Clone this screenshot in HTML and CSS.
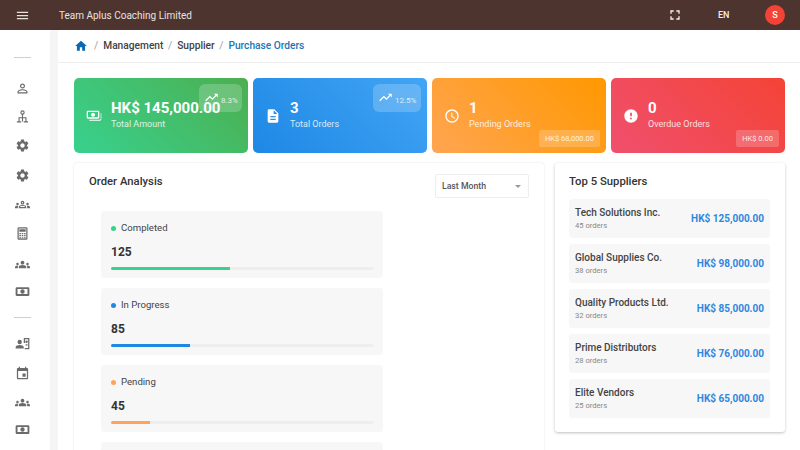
FILE: index.html
```html
<!DOCTYPE html>
<html lang="en">
<head>
<meta charset="utf-8">
<title>Purchase Orders</title>
<link rel="stylesheet" href="styles.css">
</head>
<body>
<svg class="defs" aria-hidden="true">
  <symbol id="i-menu" viewBox="0 0 24 24"><path d="M3 18h18v-2H3v2zm0-5h18v-2H3v2zm0-7v2h18V6H3z"/></symbol>
  <symbol id="i-full" viewBox="0 0 24 24"><path d="M7 14H5v5h5v-2H7v-3zm-2-4h2V7h3V5H5v5zm12 7h-3v2h5v-5h-2v3zM14 5v2h3v3h2V5h-5z"/></symbol>
  <symbol id="i-home" viewBox="0 0 24 24"><path d="M10 20v-6h4v6h5v-8h3L12 3 2 12h3v8z"/></symbol>
  <symbol id="i-person" viewBox="0 0 24 24"><path d="M12 5.9c1.16 0 2.1.94 2.1 2.1s-.94 2.1-2.1 2.1S9.9 9.16 9.9 8s.94-2.1 2.1-2.1m0 9c2.97 0 6.1 1.46 6.1 2.1v1.1H5.9V17c0-.64 3.13-2.1 6.1-2.1M12 4C9.79 4 8 5.79 8 8s1.79 4 4 4 4-1.79 4-4-1.79-4-4-4zm0 9c-2.67 0-8 1.34-8 4v3h16v-3c0-2.66-5.33-4-8-4z"/></symbol>
  <symbol id="i-tree" viewBox="0 0 24 24"><g fill="none" stroke="currentColor" stroke-width="1.8"><circle cx="12" cy="5.500" r="2.600"/><path d="M12 8v12M6.500 20v-6h11v6M3 20.500h7M14 20.500h7"/></g></symbol>
  <symbol id="i-gear" viewBox="0 0 24 24"><path d="M19.14 12.94c.04-.3.06-.61.06-.94 0-.32-.02-.64-.07-.94l2.03-1.58c.18-.14.23-.41.12-.61l-1.92-3.32c-.12-.22-.37-.29-.59-.22l-2.39.96c-.5-.38-1.03-.7-1.62-.94l-.36-2.54c-.04-.24-.24-.41-.48-.41h-3.84c-.24 0-.43.17-.47.41l-.36 2.54c-.59.24-1.13.57-1.62.94l-2.39-.96c-.22-.08-.47 0-.59.22L2.74 8.87c-.12.21-.08.47.12.61l2.03 1.58c-.05.3-.09.63-.09.94s.02.64.07.94l-2.03 1.58c-.18.14-.23.41-.12.61l1.92 3.32c.12.22.37.29.59.22l2.39-.96c.5.38 1.03.7 1.62.94l.36 2.54c.05.24.24.41.48.41h3.84c.24 0 .44-.17.47-.41l.36-2.54c.59-.24 1.13-.56 1.62-.94l2.39.96c.22.08.47 0 .59-.22l1.92-3.32c.12-.22.07-.47-.12-.61l-2.01-1.58zM12 15.6c-1.98 0-3.6-1.62-3.6-3.6s1.62-3.6 3.6-3.6 3.6 1.62 3.6 3.6-1.62 3.6-3.6 3.6z"/></symbol>
  <symbol id="i-group-o" viewBox="0 0 24 24"><path fill-rule="evenodd" d="M12 6a3 3 0 1 1 0 6 3 3 0 0 1 0-6zm0 2a1 1 0 1 0 0 2 1 1 0 0 0 0-2zm0 4.750c1.630 0 3.070.39 4.240.9 1.080.48 1.760 1.560 1.760 2.730V18H6v-1.620c0-1.170.68-2.250 1.760-2.720 1.170-.52 2.610-.91 4.240-.91zM8 16h8c0-.6-.3-.9-.7-1.100-1-.4-2.100-.65-3.300-.65s-2.300.25-3.300.65c-.4.2-.7.5-.7 1.100zM4 9a2 2 0 1 1 0 4 2 2 0 0 1 0-4zm16 0a2 2 0 1 1 0 4 2 2 0 0 1 0-4zM4 14c.39 0 .76.04 1.130.1-.4.68-.63 1.460-.63 2.290V18H0v-1.570c0-.81.48-1.530 1.220-1.850C2.070 14.210 3.010 14 4 14zm16 0c.99 0 1.930.21 2.780.58.74.32 1.220 1.040 1.220 1.850V18h-4.500v-1.610c0-.83-.23-1.610-.63-2.290.37-.06.74-.1 1.130-.1z"/></symbol>
  <symbol id="i-group" viewBox="0 0 24 24"><path d="M12 12.75c1.63 0 3.07.39 4.24.9 1.08.48 1.76 1.56 1.76 2.73V18H6v-1.61c0-1.18.68-2.26 1.76-2.73 1.17-.52 2.61-.91 4.24-.91zM4 13c1.1 0 2-.9 2-2s-.9-2-2-2-2 .9-2 2 .9 2 2 2zm1.13 1.1c-.37-.06-.74-.1-1.13-.1-.99 0-1.93.21-2.78.58C.48 14.9 0 15.62 0 16.43V18h4.5v-1.61c0-.83.23-1.61.63-2.29zM20 13c1.1 0 2-.9 2-2s-.9-2-2-2-2 .9-2 2 .9 2 2 2zm4 3.43c0-.81-.48-1.53-1.22-1.85-.85-.37-1.79-.58-2.78-.58-.39 0-.76.04-1.13.1.4.68.63 1.46.63 2.29V18H24v-1.57zM12 6c1.66 0 3 1.34 3 3s-1.34 3-3 3-3-1.34-3-3 1.34-3 3-3z"/></symbol>
  <symbol id="i-calc" viewBox="0 0 24 24"><path fill-rule="evenodd" d="M6 2h12a2 2 0 0 1 2 2v16a2 2 0 0 1-2 2H6a2 2 0 0 1-2-2V4a2 2 0 0 1 2-2zm0 2v16h12V4H6zm1 1h10v4H7V5zm0 6h2.500v2H7v-2zm3.750 0h2.500v2h-2.500v-2zm3.750 0H17v2h-2.500v-2zM7 14.500h2.500v2H7v-2zm3.750 0h2.500v2h-2.500v-2zm3.750 0H17v2h-2.500v-2zM7 18h2.500v1.500H7V18zm3.750 0h2.500v1.500h-2.500V18zm3.750 0H17v1.500h-2.500V18z"/></symbol>
  <symbol id="i-cash" viewBox="0 0 24 24"><path fill-rule="evenodd" d="M3 5h18a2 2 0 0 1 2 2v10a2 2 0 0 1-2 2H3a2 2 0 0 1-2-2V7a2 2 0 0 1 2-2zm1 3v8h16V8H4zm8 .5a3.500 3.500 0 1 1 0 7 3.500 3.500 0 0 1 0-7z"/></symbol>
  <symbol id="i-contact" viewBox="0 0 24 24"><path fill-rule="evenodd" d="M7.500 6a3.500 3.500 0 1 1 0 7 3.500 3.500 0 0 1 0-7zm0 8.500c2.800 0 6.500 1.300 6.500 3.500v2H1v-2c0-2.200 3.700-3.500 6.500-3.500zM14 3h9v18h-7.500v-2H21V5h-5v6h-2V3zm4.500 4a2 2 0 1 1 0 4 2 2 0 0 1 0-4zm-1.500 6h3v2h-3v-2z"/></symbol>
  <symbol id="i-event" viewBox="0 0 24 24"><path d="M17 12h-5v5h5v-5zM16 1v2H8V1H6v2H5c-1.11 0-1.99.9-1.99 2L3 19c0 1.1.89 2 2 2h14c1.1 0 2-.9 2-2V5c0-1.1-.9-2-2-2h-1V1h-2zm3 18H5V8h14v11z"/></symbol>
  <symbol id="i-money" viewBox="0 0 24 24"><path fill-rule="evenodd" d="M3 4h15a2 2 0 0 1 2 2v8a2 2 0 0 1-2 2H3a2 2 0 0 1-2-2V6a2 2 0 0 1 2-2zm0 2v8h15V6H3zm7.500 1a3 3 0 1 1 0 6 3 3 0 0 1 0-6zM22 8h1v9a2 2 0 0 1-2 2H5v-1.500h15.500A1.500 1.500 0 0 0 22 16V8z"/></symbol>
  <symbol id="i-doc" viewBox="0 0 24 24"><path d="M14 2H6c-1.1 0-1.99.9-1.99 2L4 20c0 1.1.89 2 1.99 2H18c1.1 0 2-.9 2-2V8l-6-6zm2 16H8v-2h8v2zm0-4H8v-2h8v2zm-3-5V3.500L18.500 9H13z"/></symbol>
  <symbol id="i-clock" viewBox="0 0 24 24"><path d="M11.990 2C6.470 2 2 6.480 2 12s4.470 10 9.990 10C17.520 22 22 17.520 22 12S17.520 2 11.990 2zM12 20c-4.420 0-8-3.580-8-8s3.580-8 8-8 8 3.580 8 8-3.580 8-8 8zm.5-13H11v6l5.250 3.150.75-1.230-4.500-2.670z"/></symbol>
  <symbol id="i-error" viewBox="0 0 24 24"><path d="M12 2C6.480 2 2 6.480 2 12s4.480 10 10 10 10-4.480 10-10S17.520 2 12 2zm1.300 15h-2.600v-2.500h2.600V17zm0-4.500h-2.600V7h2.600v5.500z"/></symbol>
  <symbol id="i-trend" viewBox="0 0 24 24"><path d="M16 6l2.290 2.290-4.880 4.880-4-4L2 16.590 3.410 18l6-6 4 4 6.300-6.290L22 12V6z"/></symbol>
</svg>

<header class="topbar">
  <svg class="top-menu"><use href="#i-menu"/></svg>
  <span class="brand">Team Aplus Coaching Limited</span>
  <div class="top-actions">
    <svg class="top-full"><use href="#i-full"/></svg>
    <span class="lang">EN</span>
    <span class="avatar">S</span>
  </div>
</header>

<div class="shell">
  <nav class="sidebar">
    <hr class="side-rule side-rule-first">
    <svg class="side-icon s1"><use href="#i-person"/></svg>
    <svg class="side-icon s2"><use href="#i-tree"/></svg>
    <svg class="side-icon s3"><use href="#i-gear"/></svg>
    <svg class="side-icon s4"><use href="#i-gear"/></svg>
    <svg class="side-icon s5"><use href="#i-group-o"/></svg>
    <svg class="side-icon s6"><use href="#i-calc"/></svg>
    <svg class="side-icon s7"><use href="#i-group"/></svg>
    <svg class="side-icon s8"><use href="#i-cash"/></svg>
    <hr class="side-rule side-rule-second">
    <svg class="side-icon s9"><use href="#i-contact"/></svg>
    <svg class="side-icon s10"><use href="#i-event"/></svg>
    <svg class="side-icon s11"><use href="#i-group"/></svg>
    <svg class="side-icon s12"><use href="#i-cash"/></svg>
  </nav>
  <div class="gutter"></div>
  <main class="main">
    <div class="crumbs">
      <svg class="crumb-home"><use href="#i-home"/></svg>
      <span class="sep">/</span><span class="crumb">Management</span>
      <span class="sep">/</span><span class="crumb">Supplier</span>
      <span class="sep">/</span><span class="crumb crumb-active">Purchase Orders</span>
    </div>
    <div class="content">
      <section class="cards">
        <article class="card card-green">
          <svg class="card-icon"><use href="#i-money"/></svg>
          <div class="card-text"><div class="card-value">HK$ 145,000.00</div><div class="card-label">Total Amount</div></div>
          <div class="trend trend-green"><svg class="trend-icon"><use href="#i-trend"/></svg><span>8.3%</span></div>
        </article>
        <article class="card card-blue">
          <svg class="card-icon"><use href="#i-doc"/></svg>
          <div class="card-text"><div class="card-value">3</div><div class="card-label">Total Orders</div></div>
          <div class="trend trend-blue"><svg class="trend-icon"><use href="#i-trend"/></svg><span>12.5%</span></div>
        </article>
        <article class="card card-orange">
          <svg class="card-icon"><use href="#i-clock"/></svg>
          <div class="card-text"><div class="card-value">1</div><div class="card-label">Pending Orders</div></div>
          <div class="amount">HK$ 68,000.00</div>
        </article>
        <article class="card card-red">
          <svg class="card-icon"><use href="#i-error"/></svg>
          <div class="card-text"><div class="card-value">0</div><div class="card-label">Overdue Orders</div></div>
          <div class="amount">HK$ 0.00</div>
        </article>
      </section>
      <section class="panels">
        <div class="panel panel-left">
          <div class="panel-head">
            <h2 class="panel-title">Order Analysis</h2>
            <div class="select"><span>Last Month</span><i class="caret"></i></div>
          </div>
          <div class="stats">
            <div class="stat">
              <div class="stat-name"><i class="dot dot-green"></i>Completed</div>
              <div class="stat-num">125</div>
              <div class="bar"><div class="fill fill-green" style="width:45.2%"></div></div>
            </div>
            <div class="stat">
              <div class="stat-name"><i class="dot dot-blue"></i>In Progress</div>
              <div class="stat-num">85</div>
              <div class="bar"><div class="fill fill-blue" style="width:30.2%"></div></div>
            </div>
            <div class="stat">
              <div class="stat-name"><i class="dot dot-orange"></i>Pending</div>
              <div class="stat-num">45</div>
              <div class="bar"><div class="fill fill-orange" style="width:15%"></div></div>
            </div>
            <div class="stat"></div>
          </div>
        </div>
        <div class="panel panel-right">
          <h2 class="panel-title">Top 5 Suppliers</h2>
          <div class="suppliers">
            <div class="supplier"><div class="sup-info"><div class="sup-name">Tech Solutions Inc.</div><div class="sup-orders">45 orders</div></div><div class="sup-amount">HK$ 125,000.00</div></div>
            <div class="supplier"><div class="sup-info"><div class="sup-name">Global Supplies Co.</div><div class="sup-orders">38 orders</div></div><div class="sup-amount">HK$ 98,000.00</div></div>
            <div class="supplier"><div class="sup-info"><div class="sup-name">Quality Products Ltd.</div><div class="sup-orders">32 orders</div></div><div class="sup-amount">HK$ 85,000.00</div></div>
            <div class="supplier"><div class="sup-info"><div class="sup-name">Prime Distributors</div><div class="sup-orders">28 orders</div></div><div class="sup-amount">HK$ 76,000.00</div></div>
            <div class="supplier"><div class="sup-info"><div class="sup-name">Elite Vendors</div><div class="sup-orders">25 orders</div></div><div class="sup-amount">HK$ 65,000.00</div></div>
          </div>
        </div>
      </section>
    </div>
  </main>
</div>
</body>
</html>
```
FILE: styles.css
```css
* { box-sizing: border-box; }
html, body { margin: 0; height: 100%; overflow: hidden; }
body { font-family: Roboto, "Liberation Sans", sans-serif; color: #333; background: #fff; width: 800px; height: 450px; }
.defs { display: none; }
svg { fill: currentColor; display: block; flex: none; }

.topbar { height: 30px; background: #4e342e; color: #f5f0ee; display: flex; align-items: center; }
.top-menu { width: 15px; height: 15px; margin-left: 15px; color: #e6e1df; }
.brand { margin-left: 29px; font-size: 10px; color: #e8e3e1; }
.top-actions { margin-left: auto; display: flex; align-items: center; }
.top-full { width: 16px; height: 16px; margin-right: 35px; }
.lang { font-size: 9px; font-weight: 500; margin-right: 35px; width: 12px; }
.avatar { width: 20px; height: 20px; border-radius: 50%; background: #f44336; color: #ffe; font-size: 9px; font-weight: 500; display: flex; align-items: center; justify-content: center; margin-right: 15px; }

.shell { display: flex; height: 420px; overflow: hidden; }
.sidebar { width: 50px; flex: none; background: #fff; display: flex; flex-direction: column; align-items: center; color: #6b6b6b; padding-right: 6px; }
.side-rule { width: 17px; height: 1px; border: 0; background: #cfcfcf; margin: 0; flex: none; }
.side-rule-first { margin-top: 27px; }
.side-icon { width: 15px; height: 15px; }
.s1 { margin-top: 23px; }
.s2 { margin-top: 13px; }
.s3 { margin-top: 14px; }
.s4 { margin-top: 15px; }
.s5 { margin-top: 14px; }
.s6 { margin-top: 14px; }
.s7 { margin-top: 16px; }
.s8 { margin-top: 12px; }
.side-rule-second { margin-top: 18px; }
.s9 { margin-top: 18px; }
.s10 { margin-top: 15px; }
.s11 { margin-top: 14px; }
.s12 { margin-top: 12px; }
.gutter { width: 8px; background: #f5f5f5; flex: none; }

.main { width: 742px; flex: none; background: #fff; }
.crumbs { height: 33px; border-bottom: 1px solid #eeeeee; display: flex; align-items: center; padding: 0 0 1px 16px; font-size: 10.200px; font-weight: 500; color: #424242; }
.crumb-home { width: 14px; height: 14px; color: #0a69b4; margin-right: 6px; }
.sep { color: #9e9e9e; font-weight: 400; margin: 0 5px 0 0; }
.crumb { margin-right: 4.500px; }
.crumb-active { color: #1976b8; }

.content { padding: 15px 15px 0 16px; }
.cards { display: grid; grid-template-columns: repeat(4, 174px); gap: 5px; }
.card { height: 75px; border-radius: 5px; color: #fff; position: relative; display: flex; align-items: center; padding-left: 12px; }
.card-green { background: linear-gradient(45deg, #38d18e, #4caf50); }
.card-blue { background: linear-gradient(45deg, #1e88e5, #42a5f5); }
.card-orange { background: linear-gradient(45deg, #ffa552, #ff9800); }
.card-red { background: linear-gradient(45deg, #f0506e, #f44336); }
.card-icon { width: 16px; height: 16px; margin-right: 9px; }
.card-text { display: flex; flex-direction: column; padding-bottom: 2px; }
.card-value { font-size: 15px; font-weight: 700; line-height: 18px; white-space: nowrap; }
.card-label { font-size: 9px; line-height: 12px; margin-top: 1px; opacity: .8; white-space: nowrap; }
.trend { position: absolute; top: 6px; right: 6px; height: 28px; border-radius: 6px; background: rgba(255,255,255,.2); display: flex; align-items: center; padding: 0 5px; font-size: 8px; color: rgba(255,255,255,.8); }
.trend span { margin-top: 4px; margin-left: 2px; }
.trend-green { width: 43px; }
.trend-blue { width: 48px; }
.trend-icon { width: 15px; height: 15px; color: #fff; margin-top: -2px; }
.amount { position: absolute; right: 6px; bottom: 6px; height: 17px; padding: 0 6px; border-radius: 2px; background: rgba(255,255,255,.2); font-size: 7.500px; line-height: 17px; color: rgba(255,255,255,.85); }

.panels { display: grid; grid-template-columns: 470px 230px; column-gap: 11px; margin-top: 10px; align-items: start; }
.panel { background: #fff; border-radius: 3px; }
.panel-left { height: 320px; box-shadow: 0 0 2px rgba(0,0,0,.14); padding: 12px 15px; }
.panel-right { height: 269px; box-shadow: 0 1px 3px rgba(0,0,0,.25); padding: 12px 15px 0 14px; }
.panel-title { margin: 0; font-size: 11.300px; font-weight: 500; line-height: 14px; color: #333; }
.panel-head { display: flex; justify-content: space-between; align-items: flex-start; height: 36px; }
.select { width: 94px; height: 24px; border: 1px solid #eee; border-radius: 2px; margin-top: -1px; display: flex; align-items: center; justify-content: space-between; padding: 0 6px; font-size: 8.700px; font-weight: 500; color: #555; }
.caret { width: 0; height: 0; border-left: 3px solid transparent; border-right: 3px solid transparent; border-top: 3px solid #999; margin-right: 1px; }
.stats { display: flex; flex-direction: column; gap: 10px; width: 282px; margin-left: 12px; }
.stat { height: 67px; flex: none; background: #f7f7f7; border-radius: 3px; padding: 11px 9px 0 10px; }
.stat-name { display: flex; align-items: center; font-size: 9.600px; line-height: 12px; color: #444; }
.dot { width: 5px; height: 5px; border-radius: 50%; margin-right: 5px; }
.dot-green, .fill-green { background: #38d18e; }
.dot-blue, .fill-blue { background: #1e88e5; }
.dot-orange, .fill-orange { background: #ffa35c; }
.stat-num { font-size: 12px; font-weight: 700; line-height: 15px; margin-top: 11px; color: #333; }
.bar { height: 3px; border-radius: 2px; background: #eeeeee; margin-top: 7px; overflow: hidden; }
.fill { height: 100%; }

.suppliers { display: flex; flex-direction: column; gap: 6.300px; margin-top: 10px; width: 201px; }
.supplier { height: 38.700px; background: #f7f7f7; border-radius: 3px; display: flex; align-items: center; justify-content: space-between; padding: 0 6px; }
.sup-info { padding-top: 2px; }
.sup-name { font-size: 10px; font-weight: 500; line-height: 12px; color: #444; }
.sup-orders { font-size: 7.600px; line-height: 10px; margin-top: 2px; color: #888; }
.sup-amount { font-size: 10px; font-weight: 700; color: #2f86e0; white-space: nowrap; }
```
